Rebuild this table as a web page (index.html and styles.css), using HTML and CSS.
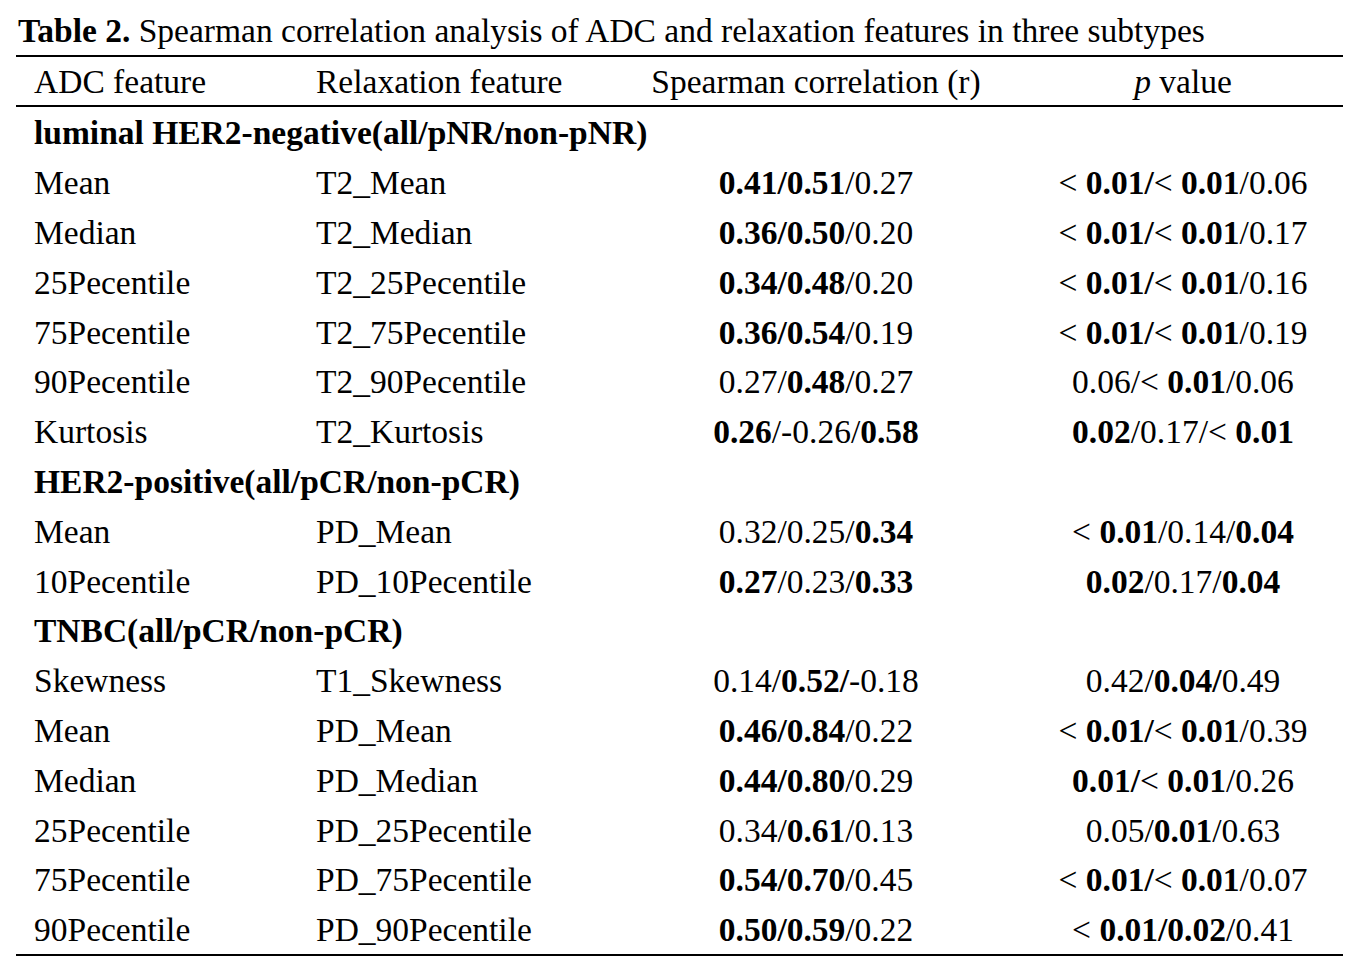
FILE: index.html
```html
<!DOCTYPE html>
<html>
<head>
<meta charset="utf-8">
<link rel="stylesheet" href="styles.css">
</head>
<body>
<div class="caption"><b>Table 2.</b> Spearman correlation analysis of ADC and relaxation features in three subtypes</div>
<table class="tbl">
  <colgroup>
    <col class="c1"><col class="c2"><col class="c3"><col class="c4">
  </colgroup>
  <thead>
    <tr><th class="l first">ADC feature</th><th class="l">Relaxation feature</th><th>Spearman correlation (r)</th><th class="pv"><i>p</i> value</th></tr>
  </thead>
  <tbody>
    <tr class="grp"><td colspan="4" class="first">luminal HER2-negative(all/pNR/non-pNR)</td></tr>
    <tr><td class="first">Mean</td><td>T2_Mean</td><td class="num"><b>0.41/0.51</b>/0.27</td><td class="num pv">&lt; <b>0.01/</b>&lt; <b>0.01</b>/0.06</td></tr>
    <tr><td class="first">Median</td><td>T2_Median</td><td class="num"><b>0.36/0.50</b>/0.20</td><td class="num pv">&lt; <b>0.01/</b>&lt; <b>0.01</b>/0.17</td></tr>
    <tr><td class="first">25Pecentile</td><td>T2_25Pecentile</td><td class="num"><b>0.34/0.48</b>/0.20</td><td class="num pv">&lt; <b>0.01/</b>&lt; <b>0.01</b>/0.16</td></tr>
    <tr><td class="first">75Pecentile</td><td>T2_75Pecentile</td><td class="num"><b>0.36/0.54</b>/0.19</td><td class="num pv">&lt; <b>0.01/</b>&lt; <b>0.01</b>/0.19</td></tr>
    <tr><td class="first">90Pecentile</td><td>T2_90Pecentile</td><td class="num">0.27/<b>0.48</b>/0.27</td><td class="num pv">0.06/&lt; <b>0.01</b>/0.06</td></tr>
    <tr><td class="first">Kurtosis</td><td>T2_Kurtosis</td><td class="num"><b>0.26</b>/-0.26/<b>0.58</b></td><td class="num pv"><b>0.02</b>/0.17/&lt; <b>0.01</b></td></tr>
    <tr class="grp"><td colspan="4" class="first">HER2-positive(all/pCR/non-pCR)</td></tr>
    <tr><td class="first">Mean</td><td>PD_Mean</td><td class="num">0.32/0.25/<b>0.34</b></td><td class="num pv">&lt; <b>0.01</b>/0.14/<b>0.04</b></td></tr>
    <tr><td class="first">10Pecentile</td><td>PD_10Pecentile</td><td class="num"><b>0.27</b>/0.23/<b>0.33</b></td><td class="num pv"><b>0.02</b>/0.17/<b>0.04</b></td></tr>
    <tr class="grp"><td colspan="4" class="first">TNBC(all/pCR/non-pCR)</td></tr>
    <tr><td class="first">Skewness</td><td>T1_Skewness</td><td class="num">0.14/<b>0.52/</b>-0.18</td><td class="num pv">0.42/<b>0.04/</b>0.49</td></tr>
    <tr><td class="first">Mean</td><td>PD_Mean</td><td class="num"><b>0.46/0.84</b>/0.22</td><td class="num pv">&lt; <b>0.01/</b>&lt; <b>0.01</b>/0.39</td></tr>
    <tr><td class="first">Median</td><td>PD_Median</td><td class="num"><b>0.44/0.80</b>/0.29</td><td class="num pv"><b>0.01/</b>&lt; <b>0.01</b>/0.26</td></tr>
    <tr><td class="first">25Pecentile</td><td>PD_25Pecentile</td><td class="num">0.34/<b>0.61</b>/0.13</td><td class="num pv">0.05/<b>0.01</b>/0.63</td></tr>
    <tr><td class="first">75Pecentile</td><td>PD_75Pecentile</td><td class="num"><b>0.54/0.70</b>/0.45</td><td class="num pv">&lt; <b>0.01/</b>&lt; <b>0.01</b>/0.07</td></tr>
    <tr><td class="first">90Pecentile</td><td>PD_90Pecentile</td><td class="num"><b>0.50/0.59</b>/0.22</td><td class="num pv">&lt; <b>0.01/0.02</b>/0.41</td></tr>
  </tbody>
</table>
</body>
</html>
```
FILE: styles.css
```css
html, body {
  margin: 0;
  padding: 0;
  background: #fff;
}
body {
  font-family: "Liberation Serif", "Times New Roman", serif;
  font-size: 33.5px;
  color: #000;
}
.caption {
  padding: 12px 0 0 18px;
  height: 43px;
  line-height: 37px;
  white-space: nowrap;
}
.tbl {
  margin-left: 16px;
  width: 1327px;
  border-collapse: collapse;
  table-layout: fixed;
  border-top: 2px solid #000;
  border-bottom: 2px solid #000;
}
.c1 { width: 300px; }
.c2 { width: 304px; }
.c3 { width: 392px; }
.c4 { width: 331px; }
.tbl th, .tbl td {
  padding: 3px 0 0 0;
  height: 46.8px;
  line-height: 36px;
  white-space: nowrap;
  vertical-align: middle;
}
.tbl th {
  font-weight: normal;
  text-align: center;
  border-bottom: 2px solid #000;
  padding-top: 2px;
  height: 46px;
}
.tbl th.l, .tbl td { text-align: left; }
.tbl .first { padding-left: 18px; }
.tbl td.num { text-align: center; }
.tbl .pv { padding-left: 11px; text-align: center; }
.grp td { font-weight: bold; }
```
